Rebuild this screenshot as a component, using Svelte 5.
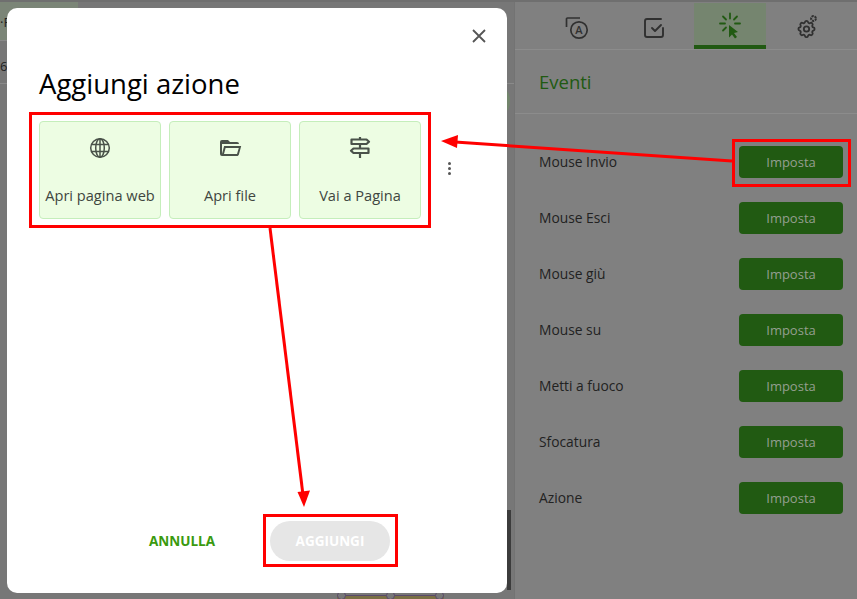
<script lang="ts">
  const actions = [
    { label: "Apri pagina web", icon: "globe" },
    { label: "Apri file", icon: "folder" },
    { label: "Vai a Pagina", icon: "sign" },
  ];

  const events = [
    "Mouse Invio",
    "Mouse Esci",
    "Mouse giù",
    "Mouse su",
    "Metti a fuoco",
    "Sfocatura",
    "Azione",
  ];

  const gear =
    "M10.325 4.317c.426 -1.756 2.924 -1.756 3.35 0a1.724 1.724 0 0 0 2.573 1.066c1.543 -.94 3.31 .826 2.37 2.37a1.724 1.724 0 0 0 1.065 2.572c1.756 .426 1.756 2.924 0 3.35a1.724 1.724 0 0 0 -1.066 2.573c.94 1.543 -.826 3.31 -2.37 2.37a1.724 1.724 0 0 0 -2.572 1.065c-.426 1.756 -2.924 1.756 -3.35 0a1.724 1.724 0 0 0 -2.573 -1.066c-1.543 .94 -3.31 -.826 -2.37 -2.37a1.724 1.724 0 0 0 -1.065 -2.572c-1.756 -.426 -1.756 -2.924 0 -3.35a1.724 1.724 0 0 0 1.066 -2.573c-.94 -1.543 .826 -3.31 2.37 -2.37c1 .608 2.296 .07 2.572 -1.065z";
</script>

<div class="page">
  <!-- dimmed editor behind the dialog -->
  <div class="canvas">
    <div class="canvas-top"><span>·F</span></div>
    <div class="canvas-row"><span>6</span></div>
    <div class="scrollbar"></div>
    <div class="blob"></div>
    <div class="shape">
      <i></i><i></i><i></i>
    </div>
  </div>

  <aside class="panel">
    <div class="tabs">
      <div class="tab">
        <svg width="24" height="24" viewBox="0 0 24 24" fill="none" stroke="#303030" stroke-width="1.7">
          <path d="M1.500 11V3a1 1 0 0 1 1 -1H15" />
          <circle cx="14" cy="14" r="8.200" />
          <text x="14" y="18" text-anchor="middle" class="tab-a">A</text>
        </svg>
      </div>
      <div class="tab">
        <svg width="24" height="24" viewBox="0 0 24 24" fill="none" stroke="#303030" stroke-width="1.900" stroke-linecap="round" stroke-linejoin="round">
          <path d="M10 12l3 3 6 -6" />
          <path d="M21 12v7a2 2 0 0 1 -2 2H5a2 2 0 0 1 -2 -2V5a2 2 0 0 1 2 -2h14" />
        </svg>
      </div>
      <div class="tab active">
        <svg width="24" height="28" viewBox="0 0 24 28" fill="none" stroke="#215a12" stroke-width="1.800" stroke-linecap="round">
          <path d="M12 1.500v5M2 11.500h5M17 11.500h5M5 4.500l3 3M19 4.500l-3 3M5 18.500l3 -3" />
          <path d="M11 13l9 7 -4 1 3 4 -2 1.500 -3 -4 -3 3z" fill="#215a12" stroke="none" />
        </svg>
      </div>
      <div class="tab">
        <svg width="26" height="26" viewBox="0 0 26 26" fill="none" stroke="#303030" stroke-width="1.800">
          <g transform="translate(1.700 3.200) scale(.9)">
            <path d={gear} stroke-width="2" />
            <circle cx="12" cy="12" r="3" stroke-width="2" />
          </g>
          <circle cx="19.500" cy="3.500" r="2.400" stroke-dasharray="2 .8" stroke-width="2" />
        </svg>
      </div>
    </div>

    <h2 class="panel-title">Eventi</h2>

    <div class="events">
      {#each events as name}
        <div class="event">
          <span>{name}</span>
          <button class="set">Imposta</button>
        </div>
      {/each}
    </div>
  </aside>

  <div class="modal">
    <button class="close" aria-label="Chiudi">
      <svg width="16" height="16" viewBox="0 0 16 16" stroke="#555" stroke-width="1.800">
        <path d="M2 2l12 12M14 2L2 14" />
      </svg>
    </button>

    <h1>Aggiungi azione</h1>

    <div class="actions">
      {#each actions as a}
        <div class="card">
          <div class="card-icon">
            {#if a.icon === "globe"}
              <svg width="22" height="22" viewBox="0 0 22 22" fill="none" stroke="#4a524a" stroke-width="1.500">
                <circle cx="11" cy="11" r="9.300" />
                <ellipse cx="11" cy="11" rx="4.300" ry="9.300" />
                <path d="M11 1.700v18.600M2.300 7.500h17.400M2.300 14.500h17.400" />
              </svg>
            {:else if a.icon === "folder"}
              <svg width="24" height="24" viewBox="0 0 24 24" fill="#4a524a">
                <path d="M6.100 10L4 18V8H21A2 2 0 0 0 19 6H12L10 4H4A2 2 0 0 0 2 6V18A2 2 0 0 0 4 20H19C19.900 20 20.700 19.400 20.900 18.500L23.200 10H6.100M19 18H6L7.600 12H20.800L19 18Z" />
              </svg>
            {:else}
              <svg width="24" height="24" viewBox="0 0 24 24" fill="none" stroke="#4a524a" stroke-width="2.200" stroke-linejoin="round">
                <path d="M12 22v-4.500M12 12.500V8M12 3.500V1" />
                <path d="M3.500 3.500V8h15l2.500 -2.250 -2.500 -2.250z" />
                <path d="M20.500 12.500V17h-15l-2.500 -2.250 2.500 -2.250z" />
              </svg>
            {/if}
          </div>
          <span>{a.label}</span>
        </div>
      {/each}
      <div class="kebab"><i></i><i></i><i></i></div>
    </div>

    <div class="footer">
      <button class="cancel">ANNULLA</button>
      <button class="add" disabled>AGGIUNGI</button>
    </div>
  </div>

  <!-- red annotations drawn on top of the screenshot -->
  <svg class="marks" width="857" height="599" viewBox="0 0 857 599" fill="none" stroke="#f00">
    <rect x="30.500" y="113.500" width="399" height="113" stroke-width="3" />
    <rect x="733.500" y="140.500" width="116" height="45" stroke-width="3" />
    <rect x="264.500" y="515.500" width="132" height="50" stroke-width="3" />
    <path d="M732 161L455 142" stroke-width="3" />
    <path d="M441 141l17 -6 -1 13z" fill="#f00" stroke="none" />
    <path d="M270 228L303 495" stroke-width="3" />
    <path d="M304 507l-6.500 -15 12.500 -1.500z" fill="#f00" stroke="none" />
  </svg>
</div>

<style>
  :global(body) {
    margin: 0;
    background: #808080;
  }

  .page {
    position: relative;
    width: 857px;
    height: 599px;
    overflow: hidden;
    display: flex;
    font-family: "Open Sans", "Noto Sans", sans-serif;
    background: #808080;
    border-top: 2px solid #6f6f6f;
    box-sizing: border-box;
  }

  .canvas {
    position: relative;
    width: 515px;
    flex-shrink: 0;
    background: #777;
    border-right: 1px solid #737373;
    box-sizing: border-box;
  }

  .canvas-top {
    height: 38px;
    width: 78px;
    background: #7b8577;
    border-bottom: 1px solid #8a8a8a;
    font-size: 13px;
    color: #222;
    line-height: 40px;
  }

  .canvas-row {
    height: 42px;
    border-bottom: 1px solid #8a8a8a;
    font-size: 13px;
    color: #222;
    line-height: 50px;
  }

  .scrollbar {
    position: absolute;
    left: 507px;
    top: 508px;
    width: 4px;
    height: 80px;
    background: #3c3c3c;
  }

  .blob {
    position: absolute;
    left: 500px;
    top: 88px;
    width: 10px;
    height: 22px;
    border-radius: 50%;
    background: #72856c;
  }

  .shape {
    position: absolute;
    left: 337px;
    top: 593px;
    width: 107px;
    height: 10px;
    display: flex;
    justify-content: space-between;
    background: linear-gradient(#5a4a6a 0 1px, #7a6f45 1px);
  }

  .shape i {
    width: 7px;
    height: 7px;
    margin-top: -4px;
    border: 1px solid #5a4a6a;
    border-radius: 50%;
    background: #777;
  }

  .panel {
    flex: 1;
    min-width: 0;
  }

  .tabs {
    display: grid;
    grid-template-columns: repeat(4, 76.5px);
    height: 47px;
    padding-left: 24px;
    border-bottom: 1px solid #8c8c8c;
    box-sizing: content-box;
  }

  .tab {
    width: 72px;
    justify-self: center;
    margin-top: 1px;
    display: flex;
    align-items: center;
    justify-content: center;
    padding-top: 4px;
    box-sizing: border-box;
  }

  .tab.active {
    background: #75856f;
    border-bottom: 4px solid #215a12;
  }

  .tab-a {
    font-family: "Open Sans", sans-serif;
    font-size: 11px;
    font-weight: 600;
    fill: #303030;
    stroke: none;
  }

  .panel-title {
    margin: 0;
    height: 64px;
    padding-left: 24px;
    line-height: 64px;
    font-size: 18.500px;
    font-weight: 400;
    color: #215a12;
    border-bottom: 1px solid #8c8c8c;
    box-sizing: border-box;
  }

  .events {
    padding: 32px 14px 0 24px;
    display: flex;
    flex-direction: column;
    gap: 24px;
  }

  .event {
    display: flex;
    align-items: center;
    justify-content: space-between;
    height: 32px;
    font-size: 13.800px;
    color: #222;
  }

  .event span {
    padding-bottom: 2px;
  }

  .set {
    width: 104px;
    height: 32px;
    border: none;
    border-radius: 4px;
    background: #215a12;
    color: #949f90;
    font: inherit;
    font-size: 13px;
  }

  .modal {
    position: absolute;
    left: 7px;
    top: 6px;
    width: 500px;
    height: 585px;
    background: #fff;
    border-radius: 10px;
    display: flex;
    flex-direction: column;
  }

  .close {
    position: absolute;
    top: 20px;
    right: 20px;
    width: 16px;
    height: 16px;
    padding: 0;
    border: none;
    background: none;
    display: flex;
  }

  h1 {
    margin: 57px 0 0 32px;
    height: 38px;
    line-height: 38px;
    font-size: 27.500px;
    font-weight: 400;
    color: #000;
  }

  .actions {
    position: relative;
    display: flex;
    gap: 8px;
    margin: 18px 0 0 32px;
  }

  .card {
    width: 122px;
    height: 98px;
    box-sizing: border-box;
    background: #edfde3;
    border: 1px solid #c5eebb;
    border-radius: 4px;
    display: flex;
    flex-direction: column;
    align-items: center;
    font-size: 14.600px;
    color: #40463f;
  }

  .card-icon {
    height: 24px;
    margin-top: 14px;
    display: flex;
    align-items: center;
  }

  .card span {
    margin-top: 25px;
    line-height: 20px;
    white-space: nowrap;
  }

  .kebab {
    position: absolute;
    left: 409px;
    top: 41px;
    width: 4px;
    display: flex;
    flex-direction: column;
    gap: 2px;
  }

  .kebab i {
    width: 3px;
    height: 3px;
    border-radius: 50%;
    background: #555;
  }

  .footer {
    margin-top: auto;
    padding: 0 117px 32px 0;
    display: flex;
    justify-content: flex-end;
    align-items: center;
    gap: 55px;
  }

  .footer button {
    border: none;
    background: none;
    padding: 0;
    font: inherit;
    font-size: 13.500px;
    font-weight: 700;
  }

  .cancel {
    color: #3a9a0f;
  }

  .footer .add {
    width: 120px;
    height: 40px;
    border-radius: 20px;
    background: #e6e6e6;
    color: #fff;
  }

  .marks {
    position: absolute;
    left: 0;
    top: -2px;
    pointer-events: none;
  }
</style>
